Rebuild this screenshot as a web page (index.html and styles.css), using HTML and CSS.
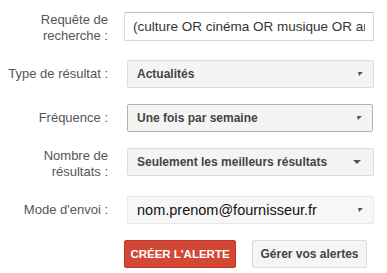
FILE: index.html
```html
<!DOCTYPE html>
<html lang="fr">
<head>
    <meta charset="UTF-8">
    <meta name="viewport" content="width=device-width, initial-scale=1.0">
    <title>Créer une alerte</title>
    <link rel="stylesheet" href="styles.css">
</head>
<body>
    <form class="alert-form">
        <label class="field-label" for="query">Requête de<br>recherche :</label>
        <div class="field">
            <input class="text-input" type="text" id="query" value="(culture OR cinéma OR musique OR art OR théâtre)">
        </div>

        <span class="field-label">Type de résultat :</span>
        <div class="field">
            <div class="select">
                <span class="select-value">Actualités</span>
                <svg class="arrow-small" width="5" height="4" viewBox="0 0 5 4"><polygon points="0,0 5,0 1,4" fill="#555"/></svg>
            </div>
        </div>

        <span class="field-label">Fréquence :</span>
        <div class="field">
            <div class="select select-active">
                <span class="select-value">Une fois par semaine</span>
                <svg class="arrow-small" width="5" height="4" viewBox="0 0 5 4"><polygon points="0,0 5,0 1,4" fill="#555"/></svg>
            </div>
        </div>

        <span class="field-label">Nombre de<br>résultats :</span>
        <div class="field">
            <div class="select">
                <span class="select-value">Seulement les meilleurs résultats</span>
                <span class="arrow-big"></span>
            </div>
        </div>

        <span class="field-label">Mode d'envoi :</span>
        <div class="field">
            <div class="select select-email">
                <span class="select-value">nom.prenom@fournisseur.fr</span>
                <svg class="arrow-small" width="5" height="4" viewBox="0 0 5 4"><polygon points="0,0 5,0 1,4" fill="#555"/></svg>
            </div>
        </div>

        <span></span>
        <div class="actions">
            <button type="button" class="btn btn-red">Créer l'alerte</button>
            <button type="button" class="btn btn-gray">Gérer vos alertes</button>
        </div>
    </form>
</body>
</html>
```

FILE: styles.css
```css
body {
    margin: 0;
    padding: 0;
    background: #fff;
    font-family: Arial, "Liberation Sans", sans-serif;
}

.alert-form {
    display: grid;
    grid-template-columns: 108px 1fr;
    column-gap: 16px;
    row-gap: 16px;
    padding: 12px 13px 0 0;
}

.field-label {
    align-self: center;
    text-align: right;
    font-size: 13px;
    line-height: 16px;
    color: #555;
}

.field {
    height: 28px;
}

.text-input {
    box-sizing: border-box;
    width: 100%;
    height: 29px;
    margin: 0;
    padding: 0 8px;
    border: 1px solid #d9d9d9;
    border-top-color: #c0c0c0;
    font-family: Arial, "Liberation Sans", sans-serif;
    font-size: 13.5px;
    color: #333;
    background: #fff;
    outline: none;
}

.select {
    box-sizing: border-box;
    display: flex;
    align-items: center;
    justify-content: space-between;
    height: 28px;
    margin-left: 3px;
    padding: 0 9px 0 9px;
    border: 1px solid #dcdcdc;
    border-radius: 2px;
    background: #f4f4f4;
}

.select-active {
    margin-right: 1px;
    border-color: #b3b3b3;
}

.select-value {
    font-size: 12px;
    font-weight: bold;
    color: #444;
    white-space: nowrap;
}

.select-email {
    border-color: #e8e8e8;
    background: #f7f7f7;
}

.select-email .select-value {
    font-size: 14.5px;
    font-weight: normal;
    color: #111;
}

.arrow-small {
    margin-right: 1px;
}

.arrow-big {
    width: 0;
    height: 0;
    margin-right: 3px;
    border-left: 4px solid transparent;
    border-right: 4px solid transparent;
    border-top: 4px solid #555;
}

.actions {
    display: flex;
    gap: 16px;
    padding-bottom: 16px;
}

.btn {
    box-sizing: border-box;
    height: 28px;
    padding: 0;
    border-radius: 2px;
    font-family: Arial, "Liberation Sans", sans-serif;
    font-weight: bold;
    white-space: nowrap;
    cursor: pointer;
}

.btn-red {
    width: 112px;
    border: 1px solid #c53727;
    background: #d14836;
    color: #fff;
    font-size: 11.5px;
    text-transform: uppercase;
}

.btn-gray {
    width: 115px;
    border: 1px solid #dcdcdc;
    background: #f5f5f5;
    color: #444;
    font-size: 12px;
}
```
